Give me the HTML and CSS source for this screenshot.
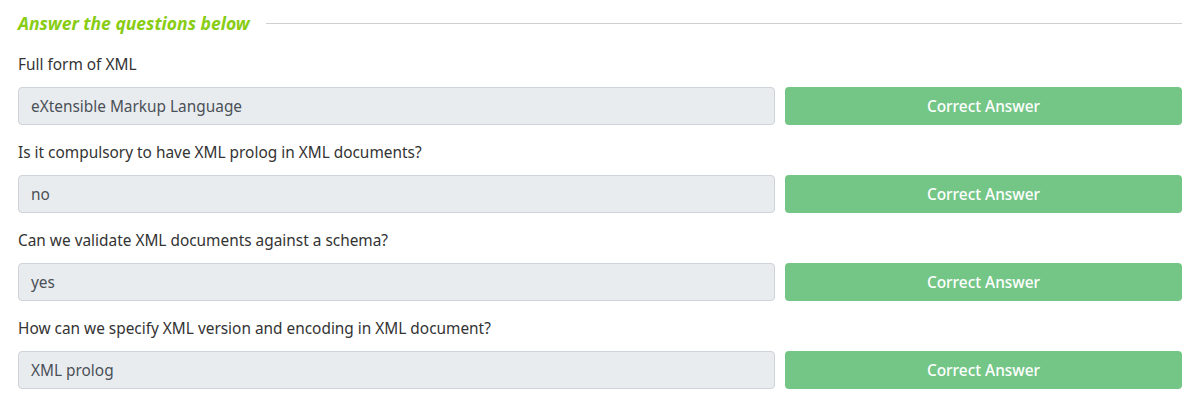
FILE: index.html
```html
<!DOCTYPE html>
<html>
<head>
<meta charset="utf-8">
<link rel="stylesheet" href="styles.css">
</head>
<body>
<div class="task">
  <div class="heading">
    <span class="heading-text">Answer the questions below</span>
    <span class="heading-line"></span>
  </div>
  <div class="question">
    <div class="q-label">Full form of XML</div>
    <div class="q-row">
      <div class="answer">eXtensible Markup Language</div>
      <div class="btn">Correct Answer</div>
    </div>
  </div>
  <div class="question">
    <div class="q-label">Is it compulsory to have XML prolog in XML documents?</div>
    <div class="q-row">
      <div class="answer">no</div>
      <div class="btn">Correct Answer</div>
    </div>
  </div>
  <div class="question">
    <div class="q-label">Can we validate XML documents against a schema?</div>
    <div class="q-row">
      <div class="answer">yes</div>
      <div class="btn">Correct Answer</div>
    </div>
  </div>
  <div class="question">
    <div class="q-label">How can we specify XML version and encoding in XML document?</div>
    <div class="q-row">
      <div class="answer">XML prolog</div>
      <div class="btn">Correct Answer</div>
    </div>
  </div>
</div>
</body>
</html>
```
FILE: styles.css
```css
html, body {
  margin: 0;
  padding: 0;
  background: #ffffff;
}
body {
  font-family: "Noto Sans", "Open Sans", sans-serif;
  color: #333333;
}
.task {
  padding: 12px 15px 0 18px;
}
.heading {
  display: flex;
  align-items: center;
  gap: 16px;
  height: 22px;
}
.heading-text {
  color: #88cc14;
  font-style: italic;
  font-weight: 700;
  font-size: 17.5px;
  white-space: nowrap;
}
.heading-line {
  flex: 1;
  height: 1px;
  background: #cfcfcf;
}
.question {
  margin-top: 21px;
}
.question + .question {
  margin-top: 18px;
}
.q-label {
  font-size: 15.4px;
  line-height: 20px;
  margin-bottom: 12px;
}
.q-row {
  display: grid;
  grid-template-columns: 1fr 397px;
  gap: 10px;
}
.answer {
  height: 38px;
  box-sizing: border-box;
  background: #e9ecef;
  border: 1px solid #ced4da;
  border-radius: 4px;
  padding: 0 12px;
  display: flex;
  align-items: center;
  font-size: 15.4px;
  color: #495057;
}
.btn {
  height: 38px;
  box-sizing: border-box;
  background: #74c687;
  border-radius: 4px;
  display: flex;
  align-items: center;
  justify-content: center;
  color: #ffffff;
  font-size: 15.4px;
  font-weight: 500;
}
```
